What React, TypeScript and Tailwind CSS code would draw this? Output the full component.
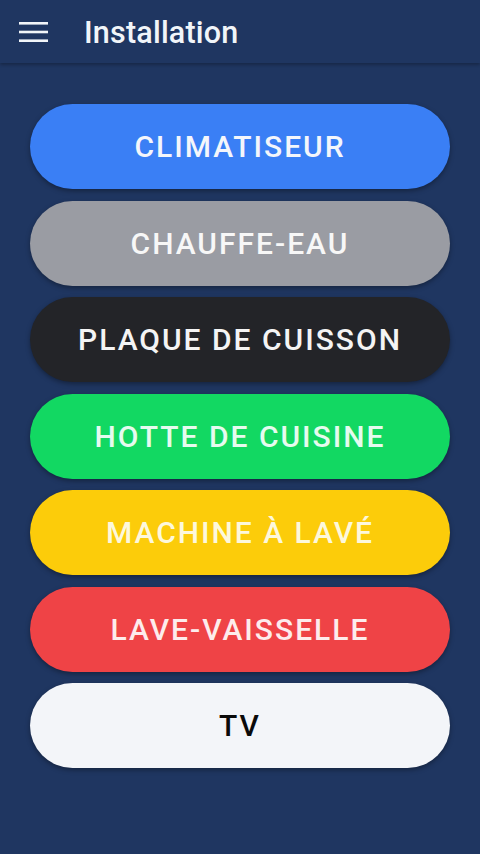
import React from "react";

const items = [
  { label: "CLIMATISEUR", cls: "bg-[#3a7ff5] text-[#f4f6fb]" },
  { label: "CHAUFFE-EAU", cls: "bg-[#9a9ca3] text-[#f7f7f7]" },
  { label: "PLAQUE DE CUISSON", cls: "bg-[#232428] text-[#f4f4f4]" },
  { label: "HOTTE DE CUISINE", cls: "bg-[#12d862] text-[#e6fbef]" },
  { label: "MACHINE À LAVÉ", cls: "bg-[#fccc0a] text-[#fdf8dc]" },
  { label: "LAVE-VAISSELLE", cls: "bg-[#ef4346] text-[#fdecec]" },
  { label: "TV", cls: "bg-[#f3f5f9] text-[#0a0a0a]" },
];

export default function App() {
  return (
    <div
      className="w-[480px] h-[854px] bg-[#1f3661] flex flex-col"
      style={{ fontFamily: "Roboto, 'Noto Sans', sans-serif" }}
    >
      <header className="h-[63px] flex items-center bg-[#1f3661] shadow-[0_2px_3px_rgba(0,0,0,0.25)] relative z-10">
        <div className="w-[84px] flex items-center pl-[19px]">
          <svg width="29" height="20" viewBox="0 0 29 20">
            <rect x="0" y="0" width="29" height="2.6" fill="#f1f5f9" />
            <rect x="0" y="8.7" width="29" height="2.6" fill="#f1f5f9" />
            <rect x="0" y="17.4" width="29" height="2.6" fill="#f1f5f9" />
          </svg>
        </div>
        <h1 className="text-[30.5px] font-medium text-[#f1f5f9] tracking-[0.2px] pt-[2px]">Installation</h1>
      </header>
      <main className="flex flex-col gap-[11.5px] px-[30px] pt-[41px]">
        {items.map((it) => (
          <button
            key={it.label}
            className={`h-[85px] rounded-full flex items-center justify-center text-[30px] font-medium tracking-[2px] shadow-[0_2px_5px_rgba(0,0,0,0.35)] ${it.cls}`}
          >
            {it.label}
          </button>
        ))}
      </main>
    </div>
  );
}
